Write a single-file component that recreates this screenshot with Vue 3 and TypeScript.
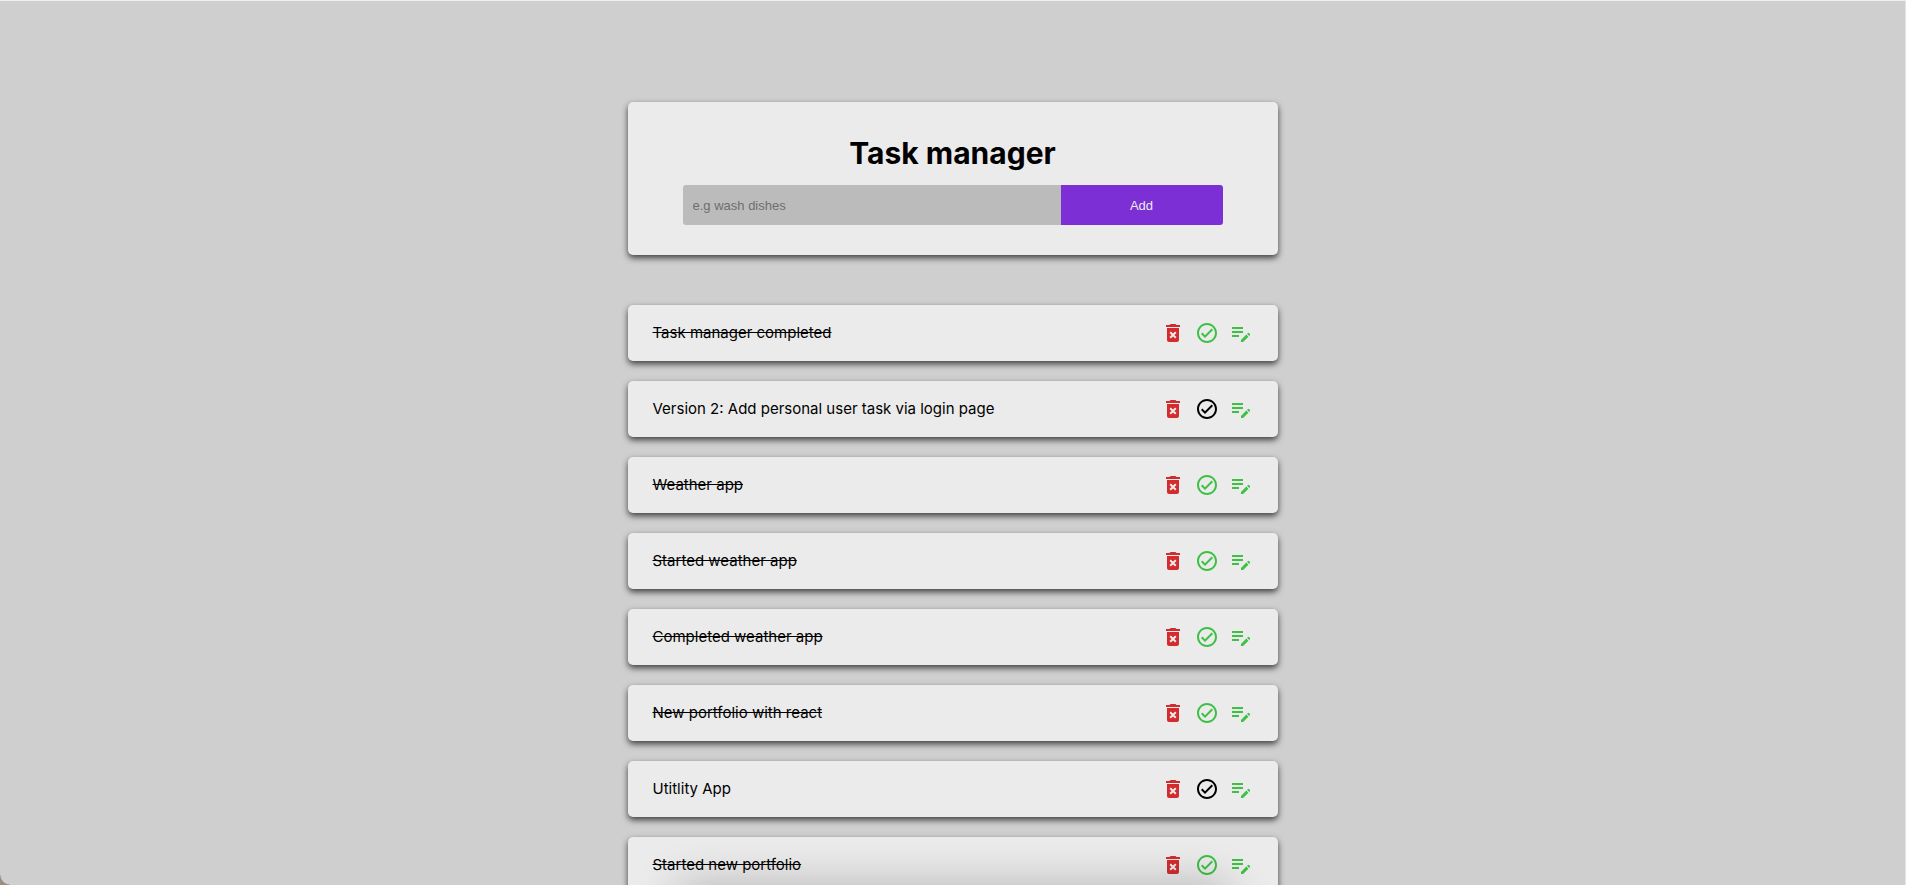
<script setup lang="ts">
import { ref } from 'vue'

interface Task {
  id: number
  name: string
  completed: boolean
}

const draft = ref('')
const tasks = ref<Task[]>([
  { id: 1, name: 'Task manager completed', completed: true },
  { id: 2, name: 'Version 2: Add personal user task via login page', completed: false },
  { id: 3, name: 'Weather app', completed: true },
  { id: 4, name: 'Started weather app', completed: true },
  { id: 5, name: 'Completed weather app', completed: true },
  { id: 6, name: 'New portfolio with react', completed: true },
  { id: 7, name: 'Utitlity App', completed: false },
  { id: 8, name: 'Started new portfolio', completed: true },
])

function addTask() {
  const name = draft.value.trim()
  if (!name) return
  tasks.value.push({ id: Date.now(), name, completed: false })
  draft.value = ''
}

function removeTask(id: number) {
  tasks.value = tasks.value.filter((task) => task.id !== id)
}

function editTask(task: Task) {
  draft.value = task.name
  removeTask(task.id)
}
</script>

<template>
  <div class="page">
    <main class="column">
      <form class="card entry" @submit.prevent="addTask">
        <h1 class="title">Task manager</h1>
        <div class="controls">
          <input v-model="draft" class="field" type="text" placeholder="e.g wash dishes" aria-label="New task" />
          <button class="add" type="submit">Add</button>
        </div>
      </form>

      <ul class="list">
        <li v-for="task in tasks" :key="task.id" class="card task">
          <span class="name" :class="{ done: task.completed }">{{ task.name }}</span>
          <div class="actions">
            <button class="icon remove" type="button" aria-label="Delete" @click="removeTask(task.id)">
              <svg viewBox="0 0 24 24" aria-hidden="true">
                <path d="M6 19c0 1.1.9 2 2 2h8c1.1 0 2-.9 2-2V7H6v12zm2.46-7.12 1.41-1.41L12 12.59l2.12-2.12 1.41 1.41L13.41 14l2.12 2.12-1.41 1.41L12 15.41l-2.12 2.12-1.41-1.41L10.59 14l-2.13-2.12zM15.5 4l-1-1h-5l-1 1H5v2h14V4z" />
              </svg>
            </button>
            <button class="icon check" :class="{ done: task.completed }" type="button" aria-label="Toggle completed" @click="task.completed = !task.completed">
              <svg viewBox="0 0 24 24" aria-hidden="true">
                <path d="M12 2C6.48 2 2 6.48 2 12s4.48 10 10 10 10-4.48 10-10S17.52 2 12 2zm0 18c-4.41 0-8-3.59-8-8s3.59-8 8-8 8 3.59 8 8-3.59 8-8 8zm4.59-12.42L10 14.17l-2.59-2.58L6 13l4 4 8-8z" />
              </svg>
            </button>
            <button class="icon edit" type="button" aria-label="Edit" @click="editTask(task)">
              <svg viewBox="0 0 24 24" aria-hidden="true">
                <path d="M3 10h11v2H3v-2zm0-2h11V6H3v2zm0 8h7v-2H3v2zm15.01-3.13.71-.71a.996.996 0 0 1 1.41 0l.71.71c.39.39.39 1.02 0 1.41l-.71.71-2.12-2.12zm-.71.71-5.3 5.3V21h2.12l5.3-5.3-2.12-2.12z" />
              </svg>
            </button>
          </div>
        </li>
      </ul>
    </main>
    <div class="corner" aria-hidden="true"></div>
    <div class="shade" aria-hidden="true"></div>
  </div>
</template>

<style>
body {
  margin: 0;
  background: #cfcfcf;
}
</style>

<style scoped>
.page {
  position: relative;
  box-sizing: border-box;
  height: 100vh;
  overflow: hidden;
  padding: 101px 20px 0;
  border-top: 1px solid #f0f0f0;
  border-right: 1px solid #e4e4e4;
  background: #cfcfcf;
  color: #000;
  font-family: Inter, 'Liberation Sans', sans-serif;
  font-size: 15px;
  line-height: 24px;
}

.column {
  max-width: 650px;
  margin: 0 auto;
}

.card {
  box-sizing: border-box;
  border-radius: 5px;
  background: #ebebeb;
  box-shadow: 0 3px 6px rgba(0, 0, 0, 0.7);
}

.entry {
  padding: 30px 55px;
}

.title {
  margin: 0 0 11px;
  font-size: 30px;
  font-weight: 700;
  line-height: 42px;
  text-align: center;
}

.controls {
  display: flex;
  height: 40px;
}

.field,
.add {
  box-sizing: border-box;
  margin: 0;
  border: 0;
  font-family: 'Liberation Sans', Arial, sans-serif;
  font-size: 13px;
}

.field {
  width: 70%;
  padding: 0 10px;
  border-radius: 3px 0 0 3px;
  background: #bbb;
  color: #000;
}

.field::placeholder {
  color: #6e6e6e;
}

.add {
  width: 30%;
  border-radius: 0 3px 3px 0;
  background: #7d2fd6;
  color: #ebebeb;
  cursor: pointer;
}

.list {
  display: flex;
  flex-direction: column;
  gap: 20px;
  margin: 50px 0 0;
  padding: 0;
  list-style: none;
}

.task {
  display: flex;
  align-items: center;
  justify-content: space-between;
  padding: 16px 25px;
}

.done.name {
  text-decoration: line-through;
}

.actions {
  display: flex;
  gap: 10px;
}

.icon {
  width: 24px;
  height: 24px;
  padding: 0;
  border: 0;
  background: none;
  color: #000;
  cursor: pointer;
}

.icon svg {
  display: block;
  width: 24px;
  height: 24px;
  fill: currentColor;
}

.remove {
  color: #d32c2f;
}

.edit,
.check.done {
  color: #3dc044;
}

.shade {
  position: absolute;
  top: 100%;
  right: 0;
  left: 0;
  width: 550px;
  height: 60px;
  margin: 0 auto;
  box-shadow: 0 0 45px rgba(0, 0, 0, 0.24);
  pointer-events: none;
}

.corner {
  position: absolute;
  bottom: 0;
  left: 0;
  width: 10px;
  height: 10px;
  background: radial-gradient(circle at 100% 0, transparent 9px, #a08c7c 10px);
}
</style>
